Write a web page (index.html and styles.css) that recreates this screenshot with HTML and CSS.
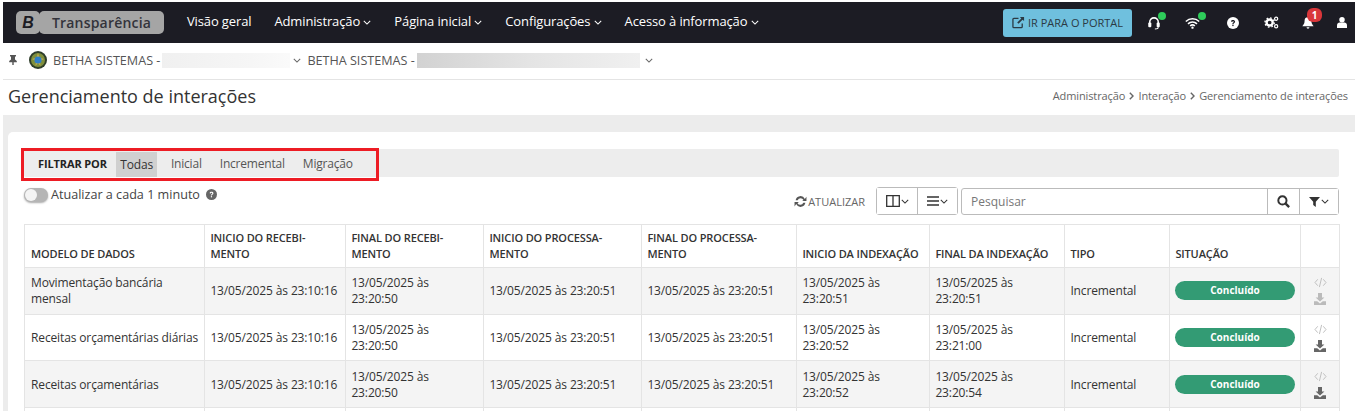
FILE: index.html
```html
<!DOCTYPE html>
<html lang="pt-BR">
<head>
<meta charset="utf-8">
<title>Gerenciamento de interações</title>
<link rel="stylesheet" href="styles.css">
</head>
<body>
<svg class="defs" width="0" height="0" aria-hidden="true">
  <symbol id="chev" viewBox="0 0 10 6"><path d="M1 1l4 4 4-4" fill="none" stroke="currentColor" stroke-width="1.3"/></symbol>
  <symbol id="chevr" viewBox="0 0 5 8"><path d="M.8.8L4 4 .8 7.200" fill="none" stroke="currentColor" stroke-width="1.400"/></symbol>
  <symbol id="code" viewBox="0 0 14 12"><path d="M4 2.5L1 6l3 3.5M10 2.5L13 6l-3 3.5M8.2 1L5.8 11" fill="none" stroke="currentColor" stroke-width="1"/></symbol>
  <symbol id="dl" viewBox="0 0 12 12"><path d="M4 0h4v4.5h2.4L6 8.6 1.6 4.5H4zM0 8.2h3.2L6 10.6l2.8-2.4H12V12H0z" fill="currentColor"/></symbol>
</svg>
<header class="nav">
  <div class="brand"><span class="brand-b">B</span><span class="brand-name">Transparência</span></div>
  <nav class="menu">
    <a>Visão geral</a>
    <a>Administração <svg class="chev"><use href="#chev"/></svg></a>
    <a>Página inicial <svg class="chev"><use href="#chev"/></svg></a>
    <a>Configurações <svg class="chev"><use href="#chev"/></svg></a>
    <a>Acesso à informação <svg class="chev"><use href="#chev"/></svg></a>
  </nav>
  <div class="nav-right">
    <a class="portal"><svg class="ext" viewBox="0 0 14 14"><path d="M11 8v3.5a1 1 0 0 1-1 1H2a1 1 0 0 1-1-1v-8a1 1 0 0 1 1-1h5" fill="none" stroke="currentColor" stroke-width="1.4"/><path d="M8.5 1H13v4.5L11.4 4 7 8.4 5.6 7 10 2.6z" fill="currentColor"/></svg>IR PARA O PORTAL</a>
    <span class="ni ni-head"><svg viewBox="0 0 14 16" width="12" height="14"><path d="M2 10V7a5 5 0 0 1 10 0v3" fill="none" stroke="#fff" stroke-width="1.8"/><rect x="0.3" y="7.5" width="3.600" height="5.500" rx="1.200" fill="#fff"/><rect x="10.100" y="7.500" width="3.600" height="5.500" rx="1.200" fill="#fff"/><path d="M12 13c0 1.500-1.500 2-4 2" fill="none" stroke="#fff" stroke-width="1.200"/></svg><i class="dot"></i></span>
    <span class="ni ni-wifi"><svg viewBox="0 0 18 14" width="15" height="12"><path d="M1 5.200a11.500 11.500 0 0 1 16 0M3.600 8a7.800 7.800 0 0 1 10.800 0M6.200 10.600a4 4 0 0 1 5.600 0" fill="none" stroke="#fff" stroke-width="1.900"/><circle cx="9" cy="12.600" r="1.400" fill="#fff"/></svg><i class="dot"></i></span>
    <span class="ni ni-help"><svg class="q" viewBox="0 0 12 12" width="12" height="12"><circle cx="6" cy="6" r="6" fill="#fff"/><path d="M4 4.600C4 3.400 5 3 6 3s2.100.5 2.100 1.700C8.100 6 6.500 6 6.500 7.200H5.300C5.300 5.500 6.800 5.500 6.800 4.800 6.800 4.400 6.400 4.200 6 4.200S5.300 4.400 5.200 5z" fill="#1c1c24"/><rect x="5.300" y="7.800" width="1.300" height="1.300" fill="#1c1c24"/></svg></span>
    <span class="ni ni-gear"><svg viewBox="0 0 16 14" width="15" height="13"><circle cx="6" cy="7" r="3.300" fill="none" stroke="#fff" stroke-width="2.600"/><circle cx="6" cy="7" r="5" fill="none" stroke="#fff" stroke-width="1.500" stroke-dasharray="1.800 2.100"/><circle cx="13" cy="3" r="1.700" fill="none" stroke="#fff" stroke-width="1.300"/><circle cx="13" cy="11" r="1.700" fill="none" stroke="#fff" stroke-width="1.300"/></svg></span>
    <span class="ni ni-bell"><svg viewBox="0 0 14 15" width="12" height="13"><path d="M7 1.500a4 4 0 0 1 4 4c0 4 2 5 2.500 6.500H.5C1 10.500 3 9.500 3 5.500a4 4 0 0 1 4-4z" fill="#fff"/><path d="M5.300 13h3.400a1.700 1.700 0 0 1-3.400 0z" fill="#fff"/></svg><b class="badge">1</b></span>
    <span class="ni ni-user"><svg viewBox="0 0 11 12" width="10" height="11"><circle cx="5.500" cy="3" r="3" fill="#fff"/><path d="M0 12V9c0-2 1.500-3 2.800-3h5.400C9.500 6 11 7 11 9v3z" fill="#fff"/></svg></span>
  </div>
</header>
<div class="context">
  <svg class="pin" viewBox="0 0 8 10" width="8" height="10"><path d="M1 0h6v1.400H6v3L7.800 6v1.300H4.700V10H3.300V7.300H.2V6L2 4.400v-3H1z" fill="#555"/></svg>
  <svg class="crest" viewBox="0 0 18 18" width="18" height="18"><circle cx="9" cy="9" r="9" fill="#2e3d2a"/><circle cx="9" cy="9" r="7" fill="#7f8f3c"/><path d="M9 2l1.500 4.500L15 8l-4 2 .5 5L9 12l-2.500 3 .5-5-4-2 4.500-1.500z" fill="#c2a94a"/><circle cx="9" cy="9" r="3.600" fill="#2f7fc8"/></svg>
  <span class="ctx-name">BETHA SISTEMAS -</span><span class="blur blur-a"></span><svg class="chev chev-g"><use href="#chev"/></svg>
  <span class="ctx-name">BETHA SISTEMAS -</span><span class="blur blur-b"></span><svg class="chev chev-g"><use href="#chev"/></svg>
</div>
<div class="title-row">
  <h1>Gerenciamento de interações</h1>
  <div class="crumbs">Administração <svg class="sep"><use href="#chevr"/></svg> Interação <svg class="sep"><use href="#chevr"/></svg> Gerenciamento de interações</div>
</div>
<main class="stage">
  <section class="card">
    <div class="filter-wrap">
      <div class="filter">
        <strong>FILTRAR POR</strong>
        <a class="on">Todas</a><a>Inicial</a><a>Incremental</a><a>Migração</a>
      </div>
      <div class="redbox"></div>
    </div>
    <div class="tools">
      <div class="auto">
        <span class="switch"><i></i></span>
        <span>Atualizar a cada 1 minuto</span>
        <svg class="hint" viewBox="0 0 12 12" width="11" height="11"><circle cx="6" cy="6" r="6" fill="#666"/><path d="M4 4.600C4 3.400 5 3 6 3s2.100.5 2.100 1.700C8.100 6 6.500 6 6.500 7.200H5.300C5.300 5.500 6.800 5.500 6.800 4.800 6.800 4.400 6.400 4.200 6 4.200S5.300 4.400 5.200 5z" fill="#fff"/><rect x="5.300" y="7.800" width="1.300" height="1.300" fill="#fff"/></svg>
      </div>
      <div class="actions">
        <a class="refresh"><svg viewBox="0 0 12 12" width="13" height="13"><path d="M10 3.600A4.500 4.500 0 0 0 1.500 4.800h1.900A3 3 0 0 1 8.800 4.500L7.500 5.500H11.500V1.500zM2 8.400A4.500 4.500 0 0 0 10.500 7.200H8.600A3 3 0 0 1 3.200 7.500L4.500 6.500H.5V10.500z" fill="#555"/></svg>ATUALIZAR</a>
        <div class="btn-group">
          <button class="tb tb-a"><svg viewBox="0 0 14 12" width="14" height="12"><path d="M.7.7h12.600v10.600H.7zM7 .7v10.600" fill="none" stroke="#333" stroke-width="1.300"/></svg><svg class="chev"><use href="#chev"/></svg></button>
          <button class="tb tb-b"><svg viewBox="0 0 12 10" width="12" height="10"><path d="M0 1h12M0 5h12M0 9h12" stroke="#333" stroke-width="1.600"/></svg><svg class="chev"><use href="#chev"/></svg></button>
        </div>
        <div class="search">
          <span class="search-ph">Pesquisar</span>
          <button class="sb sb-a"><svg viewBox="0 0 12 12" width="13" height="13"><circle cx="5" cy="5" r="3.800" fill="none" stroke="#333" stroke-width="1.800"/><path d="M8 8l3.200 3.200" stroke="#333" stroke-width="2.200"/></svg></button>
          <button class="sb sb-b"><svg viewBox="0 0 11 10" width="11" height="10"><path d="M0 0h11L6.800 4.800V10L4.200 8V4.800z" fill="#333"/></svg><svg class="chev"><use href="#chev"/></svg></button>
        </div>
      </div>
    </div>
    <table class="grid">
      <colgroup>
        <col class="c1"><col class="c2"><col class="c3"><col class="c4"><col class="c5"><col class="c6"><col class="c7"><col class="c8"><col class="c9"><col class="c10">
      </colgroup>
      <thead>
        <tr><th>MODELO DE DADOS</th><th>INICIO DO RECEBI-<br>MENTO</th><th>FINAL DO RECEBI-<br>MENTO</th><th>INICIO DO PROCESSA-<br>MENTO</th><th>FINAL DO PROCESSA-<br>MENTO</th><th>INICIO DA INDEXAÇÃO</th><th>FINAL DA INDEXAÇÃO</th><th>TIPO</th><th>SITUAÇÃO</th><th></th></tr>
      </thead>
      <tbody>
        <tr class="odd"><td>Movimentação bancária mensal</td><td>13/05/2025 às 23:10:16</td><td>13/05/2025 às 23:20:50</td><td>13/05/2025 às 23:20:51</td><td>13/05/2025 às 23:20:51</td><td>13/05/2025 às 23:20:51</td><td>13/05/2025 às 23:20:51</td><td>Incremental</td><td><span class="pill">Concluído</span></td><td class="ops"><svg class="i-code"><use href="#code"/></svg><svg class="i-dl off"><use href="#dl"/></svg></td></tr>
        <tr class="low"><td>Receitas orçamentárias diárias</td><td>13/05/2025 às 23:10:16</td><td>13/05/2025 às 23:20:50</td><td>13/05/2025 às 23:20:51</td><td>13/05/2025 às 23:20:51</td><td>13/05/2025 às 23:20:52</td><td>13/05/2025 às 23:21:00</td><td>Incremental</td><td><span class="pill">Concluído</span></td><td class="ops"><svg class="i-code"><use href="#code"/></svg><svg class="i-dl"><use href="#dl"/></svg></td></tr>
        <tr class="odd low"><td>Receitas orçamentárias</td><td>13/05/2025 às 23:10:16</td><td>13/05/2025 às 23:20:50</td><td>13/05/2025 às 23:20:51</td><td>13/05/2025 às 23:20:51</td><td>13/05/2025 às 23:20:52</td><td>13/05/2025 às 23:20:54</td><td>Incremental</td><td><span class="pill">Concluído</span></td><td class="ops"><svg class="i-code"><use href="#code"/></svg><svg class="i-dl"><use href="#dl"/></svg></td></tr>
        <tr class="tail"><td></td><td></td><td></td><td></td><td></td><td></td><td></td><td></td><td></td><td></td></tr>
      </tbody>
    </table>
  </section>
</main>
</body>
</html>
```
FILE: styles.css
```css
* { box-sizing: border-box; }
html, body { margin: 0; height: 411px; overflow: hidden; background: #fff; }
body { padding: 2px 0 0 3px; font-family: "Open Sans", sans-serif; font-size: 12px; color: #333; }
.defs { position: absolute; }
a { color: inherit; text-decoration: none; }
.chev { width: 8px; height: 5px; display: inline-block; vertical-align: 1px; }

.nav { height: 41px; background: #1c1c24; display: flex; align-items: center; padding-left: 13px; color: #fff; }
.brand { display: flex; width: 148px; height: 23px; }
.brand-b { width: 24px; background: #a5a5a5; border-radius: 5px; font: italic bold 16px/23px "Liberation Sans", sans-serif; color: #1c1c24; text-align: center; }
.brand-name { flex: 1; margin-left: -1px; background: #a5a5a5; border-radius: 5px; font-size: 14px; font-weight: 600; line-height: 23px; color: #33333b; text-align: center; letter-spacing: .2px; }
.menu { display: flex; gap: 23px; margin: 0 0 4px 23px; font-size: 13px; letter-spacing: -.13px; }
.menu a { white-space: nowrap; }
.nav-right { margin-left: auto; display: flex; align-items: center; height: 100%; }
.portal { width: 129px; height: 28px; background: #6fc0de; border-radius: 3px; color: #2b3a44; font-size: 11px; display: flex; align-items: center; justify-content: center; gap: 3px; margin-right: 16px; white-space: nowrap; }
.ext { width: 13px; height: 13px; }
.ni { position: relative; display: flex; align-items: center; justify-content: center; }
.ni-head { width: 12px; margin-right: 25px; }
.ni-wifi { width: 15px; margin-right: 27px; }
.ni-help { width: 12px; margin-right: 25px; }
.ni-gear { width: 15px; margin-right: 23px; }
.ni-bell { width: 12px; margin-right: 23px; }
.ni-user { width: 10px; margin-right: 8px; }
.dot { position: absolute; top: -4px; right: -6px; width: 8px; height: 8px; border-radius: 50%; background: #2ecc5a; }
.ni-wifi .dot { top: -5px; right: -6px; }
.badge { position: absolute; top: -8px; right: -8px; width: 15px; height: 14px; border-radius: 6px; background: #d9363a; color: #fff; font-size: 10px; line-height: 14px; text-align: center; }

.context { height: 37px; display: flex; align-items: center; border-bottom: 1px solid #e4e4e4; padding: 0 0 2px 6px; color: #555; font-size: 12.6px; }
.pin { margin-right: 12px; }
.crest { margin-right: 6px; }
.ctx-name { white-space: nowrap; }
.blur { height: 15px; margin-left: 2px; margin-right: 3px; }
.blur-a { width: 128px; background: linear-gradient(90deg, #f0f0f0, #f6f6f6 70%, #fafafa); }
.blur-b { width: 223px; margin-right: 5px; background: linear-gradient(90deg, #d2d2d2, #e4e4e4 50%, #f0f0f0); }
.chev-g { color: #666; margin-right: 6px; }

.title-row { height: 35px; display: flex; align-items: center; justify-content: space-between; padding: 0 7px 4px 5px; }
h1 { margin: 0; font-size: 18px; font-weight: 400; color: #333; }
.crumbs { font-size: 11px; color: #666; letter-spacing: -.1px; }
.sep { width: 5px; height: 8px; margin: 0 1.3px; color: #666; }

.stage { background: #ececec; padding: 17px 0 0 5px; height: 296px; }
.card { background: #fff; border-radius: 5px 0 0 0; padding: 17px 16px 0 16px; height: 279px; }
.filter-wrap { position: relative; }
.filter { height: 28px; background: #ededed; display: flex; align-items: center; padding-left: 14px; border-radius: 2px; letter-spacing: -.2px; }
.filter strong { font-size: 11px; font-weight: 700; color: #222; margin-right: 9.5px; letter-spacing: -.12px; }
.filter a { height: 25px; line-height: 25px; color: #555; padding: 0 4px; margin-right: 10px; }
.filter a.on { background: #d0d0d0; color: #333; align-self: flex-end; }
.redbox { position: absolute; left: -3px; top: -1px; width: 358px; height: 33px; border: 3px solid #ed1c24; pointer-events: none; }

.tools { display: flex; justify-content: space-between; height: 47px; }
.auto { display: flex; align-items: flex-start; gap: 3px; padding-top: 9px; color: #444; font-size: 12.6px; }
.switch { position: relative; width: 24px; height: 14px; margin-top: 2px; border-radius: 7px; background: #b5b5b5; box-shadow: 0 1px 2px #aaa; }
.switch i { position: absolute; left: 1px; top: 1px; width: 12px; height: 12px; border-radius: 50%; background: #f4f4f4; }
.hint { margin: 3px 0 0 3px; }
.actions { display: flex; align-items: flex-start; padding-top: 10px; }
.refresh { display: flex; align-items: center; gap: 1px; height: 28px; margin-right: 11px; font-size: 11px; color: #666; }
.btn-group { display: flex; width: 82px; height: 28px; border: 1px solid #bbb; border-radius: 3px; margin-right: 3px; }
button { background: #fff; border: 0; padding: 0; display: flex; align-items: center; justify-content: center; gap: 1px; color: #333; }
.tb { width: 40px; }
.tb-b { flex: 1; border-left: 1px solid #bbb; }
.search { display: flex; align-items: stretch; width: 378px; height: 27px; margin-top: 1px; border: 1px solid #bbb; border-radius: 3px; }
.search-ph { flex: 1; padding-left: 9px; line-height: 25px; color: #777; font-size: 12px; }
.sb { border-left: 1px solid #bbb; }
.sb-a { width: 32px; }
.sb-b { width: 39px; }

.grid { width: 1315px; table-layout: fixed; border-collapse: collapse; font-size: 12px; letter-spacing: -.13px; }
.c1 { width: 180px; } .c2 { width: 141px; } .c3 { width: 138px; } .c4 { width: 158px; } .c5 { width: 155px; }
.c6 { width: 133px; } .c7 { width: 135px; } .c8 { width: 105px; } .c9 { width: 131px; } .c10 { width: 39px; }
.grid th, .grid td { border: 1px solid #e4e4e4; padding: 0 5.4px; }
.grid th:first-child, .grid td:first-child { padding-left: 6px; }
.grid th { height: 43px; vertical-align: bottom; text-align: left; font-size: 11px; font-weight: 600; line-height: 16px; padding-bottom: 5px; color: #333; }
.grid td { height: 46.67px; line-height: 16px; color: #333; }
.grid tr.low td { padding-top: 1px; }
.grid tr.odd td { background: #f4f4f4; }
.grid tr.tail td { height: 10px; }
.pill { display: block; height: 19px; border-radius: 10px; background: #339b74; color: #fff; font-size: 10px; font-weight: 700; line-height: 19px; text-align: center; letter-spacing: 0; }
.ops svg { display: block; margin: 0 auto; }
.i-code { width: 13px; height: 11px; color: #bbb; margin-bottom: 5px !important; }
.i-dl { width: 12px; height: 12px; color: #666; }
.i-dl.off { color: #bbb; }
```
